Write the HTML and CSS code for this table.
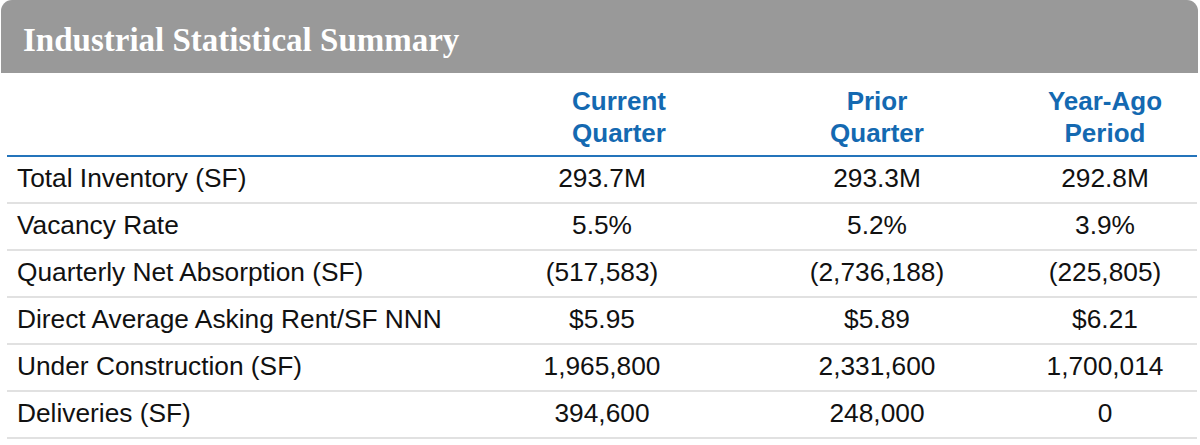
FILE: index.html
```html
<!DOCTYPE html>
<html lang="en">
<head>
<meta charset="utf-8">
<title>Industrial Statistical Summary</title>
<link rel="stylesheet" href="styles.css">
</head>
<body>
<div class="panel">
  <div class="banner"><h1 class="title">Industrial Statistical Summary</h1></div>
  <div class="table">
    <div class="row head">
      <div class="cell label"></div>
      <div class="cell hcell shift">Current<br>Quarter</div>
      <div class="cell hcell">Prior<br>Quarter</div>
      <div class="cell hcell">Year-Ago<br>Period</div>
    </div>
    <div class="row">
      <div class="cell label">Total Inventory (SF)</div>
      <div class="cell">293.7M</div>
      <div class="cell">293.3M</div>
      <div class="cell">292.8M</div>
    </div>
    <div class="row">
      <div class="cell label">Vacancy Rate</div>
      <div class="cell">5.5%</div>
      <div class="cell">5.2%</div>
      <div class="cell">3.9%</div>
    </div>
    <div class="row">
      <div class="cell label">Quarterly Net Absorption (SF)</div>
      <div class="cell">(517,583)</div>
      <div class="cell">(2,736,188)</div>
      <div class="cell">(225,805)</div>
    </div>
    <div class="row">
      <div class="cell label">Direct Average Asking Rent/SF NNN</div>
      <div class="cell">$5.95</div>
      <div class="cell">$5.89</div>
      <div class="cell">$6.21</div>
    </div>
    <div class="row">
      <div class="cell label">Under Construction (SF)</div>
      <div class="cell">1,965,800</div>
      <div class="cell">2,331,600</div>
      <div class="cell">1,700,014</div>
    </div>
    <div class="row">
      <div class="cell label">Deliveries (SF)</div>
      <div class="cell">394,600</div>
      <div class="cell">248,000</div>
      <div class="cell">0</div>
    </div>
  </div>
</div>
</body>
</html>
```

FILE: styles.css
```css
html, body {
  margin: 0;
  padding: 0;
  background: #ffffff;
}

.panel {
  width: 1200px;
}

.banner {
  margin-left: 1px;
  width: 1197px;
  height: 73px;
  background: #999999;
  border-radius: 11px 11px 0 0;
  display: flex;
  align-items: flex-start;
}

.title {
  margin: 0;
  padding: 21px 0 0 22px;
  font-family: "Liberation Serif", "Times New Roman", serif;
  font-weight: bold;
  font-size: 33px;
  line-height: 38px;
  color: #ffffff;
}

.table {
  margin-left: 7px;
  width: 1190px;
  font-family: "Liberation Sans", Arial, sans-serif;
  font-size: 26.3px;
  color: #111111;
}

.row {
  display: grid;
  grid-template-columns: 456px 278px 272px 184px;
  height: 45px;
  border-bottom: 2px solid #e1e1e1;
  box-sizing: content-box;
}

.cell {
  text-align: center;
  line-height: 43px;
  padding-bottom: 2px;
  white-space: nowrap;
}

.cell.label {
  text-align: left;
  padding-left: 10px;
}

.row.head {
  height: 82px;
  border-bottom: 2px solid #2474bb;
  align-items: end;
}

.hcell {
  font-weight: bold;
  font-size: 26px;
  color: #1469b1;
  line-height: 32px;
  padding-bottom: 6px;
}

.hcell.shift {
  padding-left: 34px;
}
```
